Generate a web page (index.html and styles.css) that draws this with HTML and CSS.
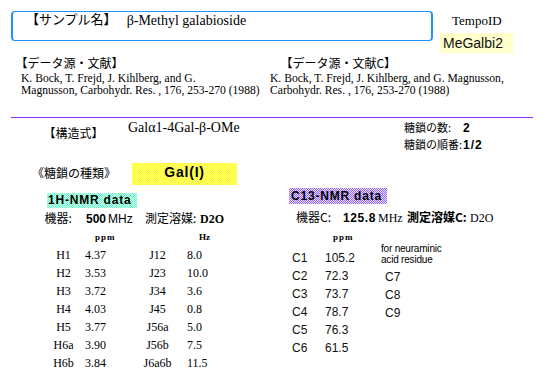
FILE: index.html
```html
<!DOCTYPE html>
<html lang="ja">
<head>
<meta charset="utf-8">
<title>β-Methyl galabioside</title>
<link rel="stylesheet" href="styles.css">
</head>
<body>
<div class="page">
  <div class="top">
    <div class="namebox">
      <span class="jp name-label">【サンプル名】</span>
      <span class="name">β-Methyl galabioside</span>
    </div>
    <div class="tempo">
      <div class="tempo-label">TempoID</div>
      <div class="tempo-id">MeGalbi2</div>
    </div>
  </div>

  <div class="refs">
    <div class="ref ref-left">
      <div class="jp ref-head ref-head-left">【データ源・文献】</div>
      <div class="cite cite-left">K. Bock, T. Frejd, J. Kihlberg, and G.<br>Magnusson, Carbohydr. Res. , 176, 253-270 (1988)</div>
    </div>
    <div class="ref ref-right">
      <div class="jp ref-head ref-head-right">【データ源・文献C】</div>
      <div class="cite">K. Bock, T. Frejd, J. Kihlberg, and G. Magnusson,<br>Carbohydr. Res. , 176, 253-270 (1988)</div>
    </div>
  </div>

  <div class="rule"></div>

  <div class="struct">
    <div class="struct-left">
      <span class="jp struct-label">【構造式】</span>
      <span class="formula">Galα1-4Gal-β-OMe</span>
    </div>
    <div class="counts">
      <div class="count"><span class="jp count-label">糖鎖の数:</span><b class="count-val">2</b></div>
      <div class="count"><span class="jp count-label">糖鎖の順番:</span><b class="count-val">1/2</b></div>
    </div>
  </div>

  <div class="galrow">
    <span class="jp gal-label">《糖鎖の種類》</span>
    <div class="gal-box">Gal(I)</div>
  </div>

  <div class="nmr">
    <div class="h-col">
      <div class="tag tag-h">1H-NMR data</div>
      <div class="inst inst-h">
        <span class="jp ih1">機器:</span>
        <b class="sans ih2">500</b>
        <span class="sans ih3">MHz</span>
        <span class="jp ih4">測定溶媒:</span>
        <b class="ih5">D2O</b>
      </div>
      <div class="units">
        <span class="ppm">ppm</span>
        <span class="hz">Hz</span>
      </div>
      <div class="hgrid">
        <span class="hl">H1</span><span class="hv">4.37</span><span class="jl">J12</span><span class="jv">8.0</span>
        <span class="hl">H2</span><span class="hv">3.53</span><span class="jl">J23</span><span class="jv">10.0</span>
        <span class="hl">H3</span><span class="hv">3.72</span><span class="jl">J34</span><span class="jv">3.6</span>
        <span class="hl">H4</span><span class="hv">4.03</span><span class="jl">J45</span><span class="jv">0.8</span>
        <span class="hl">H5</span><span class="hv">3.77</span><span class="jl">J56a</span><span class="jv">5.0</span>
        <span class="hl">H6a</span><span class="hv">3.90</span><span class="jl">J56b</span><span class="jv">7.5</span>
        <span class="hl">H6b</span><span class="hv">3.84</span><span class="jl">J6a6b</span><span class="jv">11.5</span>
      </div>
    </div>

    <div class="c-col">
      <div class="tag tag-c">C13-NMR data</div>
      <div class="inst inst-c">
        <span class="jp ic1">機器C:</span>
        <b class="sans ic2">125.8</b>
        <span class="ic3">MHz</span>
        <b class="jp ic4">測定溶媒C:</b>
        <span class="ic5">D2O</span>
      </div>
      <div class="c-lower">
        <div class="c-data">
          <div class="ppm ppm-c">ppm</div>
          <div class="cgrid">
            <span>C1</span><span>105.2</span>
            <span>C2</span><span>72.3</span>
            <span>C3</span><span>73.7</span>
            <span>C4</span><span>78.7</span>
            <span>C5</span><span>76.3</span>
            <span>C6</span><span>61.5</span>
          </div>
        </div>
        <div class="notes">
          <div class="note">for neuraminic<br>acid residue</div>
          <div class="extra">
            <div>C7</div>
            <div>C8</div>
            <div>C9</div>
          </div>
        </div>
      </div>
    </div>
  </div>
</div>
</body>
</html>
```

FILE: styles.css
```css
* { box-sizing: border-box; }

html, body {
  margin: 0;
  padding: 0;
  background: #ffffff;
}

body {
  width: 547px;
  height: 376px;
  overflow: hidden;
  color: #000000;
  font-family: "Liberation Serif", "Times New Roman", serif;
}

.jp {
  font-family: "Noto Sans CJK JP", sans-serif;
  font-size: 12px;
  line-height: 14px;
  font-weight: normal;
}

.sans {
  font-family: "Liberation Sans", Arial, sans-serif;
}

/* ---------- header ---------- */
.top {
  display: flex;
  align-items: flex-start;
  height: 53px;
  padding: 11px 0 0 11px;
}

.namebox {
  display: flex;
  align-items: flex-start;
  width: 422px;
  height: 30px;
  padding-left: 13px;
  border-style: solid;
  border-color: #1e90ff;
  border-width: 1px 2px;
  border-radius: 4px;
}

.name-label {
  font-size: 13px;
  line-height: 12px;
  margin-top: 0.5px;
}

.name {
  font-size: 14px;
  line-height: 16px;
  margin-top: 1.3px;
  margin-left: 10px;
}

.tempo {
  width: 73px;
  margin-left: 7px;
}

.tempo-label {
  font-size: 13px;
  line-height: 16px;
  margin-top: 1.6px;
  padding-left: 12px;
}

.tempo-id {
  height: 20px;
  margin-top: 4.4px;
  padding-left: 3px;
  font-family: "Liberation Sans", Arial, sans-serif;
  font-size: 14px;
  line-height: 20px;
  color: #111111;
  background: repeating-conic-gradient(#ffffa8 0 25%, #fffff0 0 50%) 0 0 / 2px 2px;
}

/* ---------- references ---------- */
.refs {
  display: flex;
  margin-top: 2.7px;
}

.ref-left { width: 270px; }
.ref-right { flex: 1; }

.ref-head-left { padding-left: 15.4px; }
.ref-head-right { padding-left: 10.4px; }

.cite {
  margin-top: 3.3px;
  font-size: 11.6px;
  line-height: 12px;
  white-space: nowrap;
}

.cite-left { padding-left: 21px; }

.rule {
  width: 522px;
  height: 1px;
  margin: 20px 0 0 11px;
  background: #9933ff;
}

/* ---------- structure ---------- */
.struct {
  display: flex;
  align-items: flex-start;
  padding-top: 1.2px;
}

.struct-left {
  display: flex;
  align-items: flex-start;
  width: 360.6px;
  margin-left: 43.4px;
}

.struct-label { margin-top: 6.5px; }

.formula {
  margin-top: 1.1px;
  margin-left: 24.6px;
  font-size: 14px;
  line-height: 16px;
}

.count {
  display: flex;
  align-items: baseline;
  height: 17px;
}

.count-label {
  flex: none;
  width: 59px;
  font-size: 11px;
  line-height: 17px;
  white-space: nowrap;
}

.count-val {
  font-family: "Liberation Sans", Arial, sans-serif;
  font-size: 12px;
  line-height: 17px;
  letter-spacing: 1px;
}

/* ---------- sugar type ---------- */
.galrow {
  display: flex;
  align-items: flex-start;
  margin-top: 9.8px;
  padding-left: 32px;
}

.gal-label {
  width: 100px;
  margin-top: 2.7px;
}

.gal-box {
  width: 105px;
  height: 22px;
  padding-top: 1px;
  text-align: center;
  font-family: "Liberation Sans", Arial, sans-serif;
  font-weight: bold;
  font-size: 14px;
  line-height: 16px;
  letter-spacing: 0.8px;
  background: repeating-conic-gradient(#ffff10 0 25%, #ffff90 0 50%) 0 0 / 2px 2px;
}

/* ---------- NMR ---------- */
.nmr { display: flex; }

.h-col { width: 270px; }
.c-col { flex: 1; }

.tag {
  font-family: "Liberation Sans", Arial, sans-serif;
  font-weight: bold;
  font-size: 12px;
  letter-spacing: 0.8px;
  white-space: nowrap;
}

.tag-h {
  width: 90px;
  height: 15px;
  margin: 8px 0 0 47px;
  padding-left: 1px;
  line-height: 15px;
  background: repeating-conic-gradient(#55ffc4 0 25%, #e6fff6 0 50%) 0 0 / 2px 2px;
}

.tag-c {
  width: 98px;
  height: 16px;
  margin: 3px 0 0 19px;
  padding-left: 2px;
  line-height: 16px;
  background: repeating-conic-gradient(#9966ff 0 25%, #e2dcff 0 50%) 0 0 / 2px 2px;
}

.inst {
  display: flex;
  align-items: baseline;
  height: 14px;
  font-size: 12px;
  line-height: 14px;
  white-space: nowrap;
}

.inst-h { margin: 2.7px 0 0 44.5px; }
.ih1 { width: 41.5px; }
.ih2 { width: 22px; }
.ih3 { width: 37px; }
.ih4 { width: 55px; }
.ih5 { font-family: "Liberation Serif", serif; }

.inst-c { margin: 5.7px 0 0 26px; }
.ic1 { width: 47px; }
.ic2 { width: 35px; letter-spacing: 0.6px; }
.ic3 { width: 29px; }
.ic4 { width: 63px; font-weight: bold; }

.units {
  display: flex;
  height: 10px;
  margin-top: 7.8px;
  font-weight: bold;
  font-size: 9px;
  line-height: 10px;
}

.ppm {
  font-weight: bold;
  font-size: 9px;
  line-height: 10px;
  letter-spacing: 1px;
}

.units .ppm {
  width: 104px;
  margin-left: 95px;
}

.hgrid {
  display: grid;
  grid-template-columns: 27px 65px 31px auto;
  margin: 3.5px 0 0 50px;
  font-size: 12px;
  line-height: 18px;
}

.hl, .jl {
  text-align: center;
  white-space: nowrap;
}

.hv { padding-left: 8px; }
.jv { padding-left: 14px; }

.c-lower {
  display: flex;
  align-items: flex-start;
}

.c-data {
  width: 89px;
  margin-left: 22px;
}

.ppm-c {
  height: 10px;
  margin: 8.3px 0 0 41px;
}

.cgrid {
  display: grid;
  grid-template-columns: 33px auto;
  margin-top: 7px;
  font-family: "Liberation Sans", Arial, sans-serif;
  font-size: 12px;
  line-height: 18px;
  color: #111111;
}

.notes {
  margin-top: 19.5px;
  font-family: "Liberation Sans", Arial, sans-serif;
}

.note {
  font-size: 10px;
  line-height: 11px;
  letter-spacing: -0.2px;
}

.extra {
  margin-top: 2.8px;
  padding-left: 4px;
  font-size: 12px;
  line-height: 18px;
  color: #111111;
}
```
